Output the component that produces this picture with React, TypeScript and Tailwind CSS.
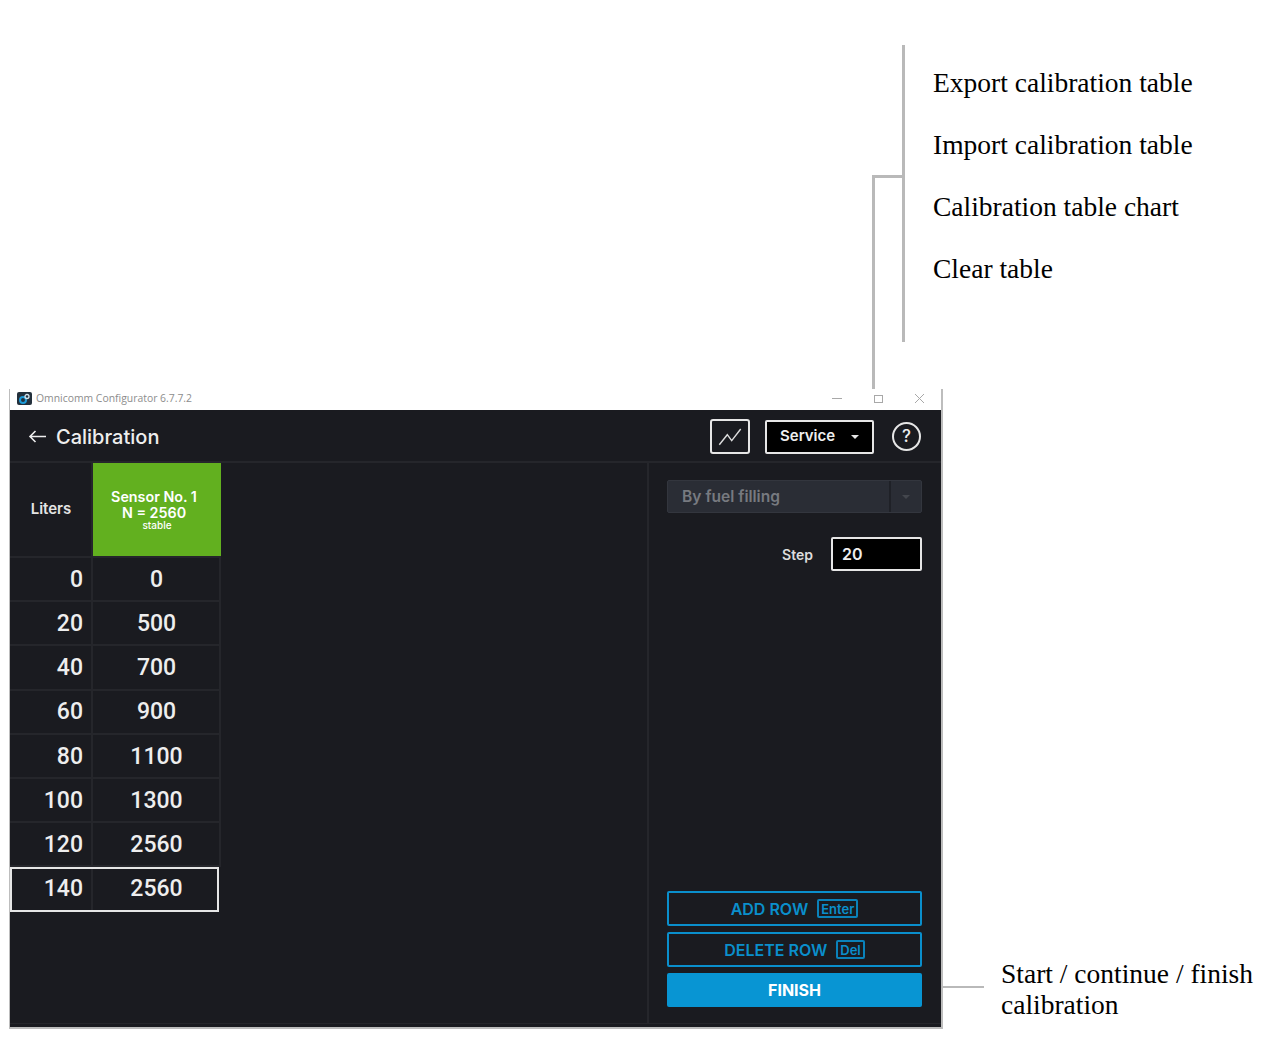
const rows = [
  ['0', '0'],
  ['20', '500'],
  ['40', '700'],
  ['60', '900'],
  ['80', '1100'],
  ['100', '1300'],
  ['120', '2560'],
  ['140', '2560'],
]

const notes = ['Export calibration table', 'Import calibration table', 'Calibration table chart', 'Clear table']

function AppLogo() {
  return (
    <svg width="15" height="13" viewBox="0 0 15 13" className="shrink-0">
      <rect width="15" height="13" rx="2" fill="#23303c" />
      <circle cx="6" cy="8" r="3" fill="none" stroke="#1d9bd8" strokeWidth="2" />
      <circle cx="10" cy="4.5" r="2" fill="none" stroke="#d5e4ee" strokeWidth="1.3" />
    </svg>
  )
}

function Caret({ color }: { color: string }) {
  return (
    <svg width="8" height="4" viewBox="0 0 8 4">
      <path d="M0 0h8L4 4z" fill={color} />
    </svg>
  )
}

function Shortcut({ label }: { label: string }) {
  return (
    <span className="border-2 border-[#0a82ba] rounded-[2px] px-[2px] pt-[1px] h-[19px] flex items-center text-[13px] font-semibold leading-none ml-[9px]">
      {label}
    </span>
  )
}

export default function App() {
  return (
    <div className="relative w-[1269px] h-[1044px] bg-white overflow-hidden font-['Inter',sans-serif]">
      {/* callout lines */}
      <div className="absolute left-[902px] top-[45px] w-[3px] h-[297px] bg-[#b9b9b9]" />
      <div className="absolute left-[873px] top-[175px] w-[30px] h-[3px] bg-[#b9b9b9]" />
      <div className="absolute left-[872px] top-[175px] w-[3px] h-[214px] bg-[#b9b9b9]" />
      <div className="absolute left-[941px] top-[986px] w-[43px] h-[2px] bg-[#b9b9b9]" />

      <div className="h-[389px] pl-[933px] pt-[67px] font-['Liberation_Serif',serif] text-[27.5px] text-black leading-[31px] flex flex-col gap-[31px]">
        {notes.map((note) => (
          <div key={note}>{note}</div>
        ))}
      </div>

      <div className="flex">
        <div className="ml-[9px] w-[934px] h-[640px] border-l border-r-2 border-b-2 border-[#bdbdbd] flex flex-col shrink-0">
          <div className="h-[21px] bg-white flex items-center pl-[7px] pb-[2px] shrink-0">
            <AppLogo />
            <span className="ml-[4px] font-['Open_Sans',sans-serif] text-[10.4px] text-[#8d8d8d]">Omnicomm Configurator 6.7.7.2</span>
            <div className="ml-auto flex items-center">
              <div className="w-[10px] h-px bg-[#a8a8a8]" />
              <div className="w-[9px] h-[8px] border border-[#a8a8a8] ml-[32px]" />
              <svg width="11" height="11" viewBox="0 0 11 11" className="ml-[31px] mr-[16px]">
                <path d="M1 1l9 9M10 1l-9 9" stroke="#a8a8a8" strokeWidth="1" />
              </svg>
            </div>
          </div>

          <div className="h-[53px] bg-[#1a1b20] border-b-2 border-[#25262b] flex items-center pl-[18px] pt-[2px] shrink-0">
            <svg width="18" height="13" viewBox="0 0 18 13" fill="none" stroke="#eeeeee" strokeWidth="1.6">
              <path d="M18 6.5H2M7.5 1L2 6.5 7.5 12" />
            </svg>
            <span className="ml-[10px] text-[20px] font-medium text-[#eeeeee]">Calibration</span>
            <div className="ml-auto flex items-center">
              <div className="w-[40px] h-[35px] border-2 border-[#e6e6e6] rounded-[3px] flex items-center justify-center">
                <svg width="24" height="18" viewBox="0 0 24 18" fill="none" stroke="#dddddd" strokeWidth="1.4">
                  <path d="M1.3 16.7L9.3 6.7l4.4 6L22.7 1" />
                </svg>
              </div>
              <div className="ml-[15px] w-[109px] h-[34px] bg-black border-2 border-[#e6e6e6] rounded-[2px] flex items-center pl-[13px] text-[15px] font-semibold text-[#eeeeee]">
                Service
                <span className="ml-[16px] flex"><Caret color="#e6e6e6" /></span>
              </div>
              <div className="ml-[18px] mr-[20px] w-[29px] h-[29px] rounded-full border-2 border-[#e6e6e6] flex items-center justify-center text-[17px] font-medium text-[#eeeeee]">
                ?
              </div>
            </div>
          </div>

          <div className="flex-1 flex bg-[#1a1b20] min-h-0">
            <div className="w-[639px] shrink-0 border-r-2 border-[#25262b]">
              <div className="w-[211px]">
                <div className="flex h-[95px] border-b-2 border-[#25262b]">
                  <div className="w-[83px] flex items-center justify-center pl-[1px] text-[15px] font-semibold text-[#e4e4e4] border-r-2 border-[#25262b]">
                    Liters
                  </div>
                  <div className="w-[128px] bg-[#62b01f] text-white flex flex-col items-center justify-center font-semibold text-[14.3px] leading-[16px] pb-[1px]">
                    <span className="pr-[6px]">Sensor No. 1</span>
                    <span className="pr-[6px]">N = 2560</span>
                    <span className="text-[10px] leading-[9px] font-medium">stable</span>
                  </div>
                </div>
                {rows.map(([liters, value], i) => (
                  <div
                    key={i}
                    className={
                      i === rows.length - 1
                        ? 'flex h-[44.2px] text-[23px] font-["Roboto",sans-serif] font-medium text-[#eeeeee] border-2 border-[#e6e6e6] w-[209px]'
                        : 'flex h-[44.2px] text-[23px] font-["Roboto",sans-serif] font-medium text-[#eeeeee] border-b-2 border-r-2 border-[#25262b] w-[211px]'
                    }
                  >
                    <div
                      className={
                        i === rows.length - 1
                          ? 'w-[81px] flex items-center justify-end pr-[8px] border-r-2 border-[#25262b]'
                          : 'w-[83px] flex items-center justify-end pr-[8px] pt-[2px] border-r-2 border-[#25262b]'
                      }
                    >
                      {liters}
                    </div>
                    <div
                      className={
                        i === rows.length - 1
                          ? 'flex-1 flex items-center justify-center pl-[3px]'
                          : 'flex-1 flex items-center justify-center pl-[1px] pt-[2px]'
                      }
                    >
                      {value}
                    </div>
                  </div>
                ))}
              </div>
            </div>

            <div className="flex-1 pl-[18px] pr-[19px] pt-[17px] pb-[16px] flex flex-col">
              <div className="h-[33px] bg-[#2a2d35] border border-[#33363e] rounded-[2px] flex items-center shrink-0">
                <span className="flex-1 pl-[14px] text-[15.6px] font-semibold text-[#777a80]">By fuel filling</span>
                <div className="w-[32px] h-full border-l-2 border-[#1f2127] flex items-center justify-center">
                  <Caret color="#43464d" />
                </div>
              </div>
              <div className="mt-[24px] flex items-center justify-end">
                <span className="text-[14px] font-semibold text-[#dddddd] mr-[18px]">Step</span>
                <div className="w-[91px] h-[34px] bg-black border-2 border-[#e6e6e6] rounded-[2px] flex items-center pl-[9px] text-[16px] font-semibold text-[#eeeeee]">
                  20
                </div>
              </div>
              <div className="mt-auto flex flex-col gap-[6px] text-[16px] font-semibold text-[#0a8fcc]">
                <div className="h-[35px] border-2 border-[#0a8fcc] rounded-[2px] flex items-center justify-center">
                  ADD ROW
                  <Shortcut label="Enter" />
                </div>
                <div className="h-[35px] border-2 border-[#0a8fcc] rounded-[2px] flex items-center justify-center">
                  DELETE ROW
                  <Shortcut label="Del" />
                </div>
                <div className="h-[34px] bg-[#0895d3] rounded-[2px] flex items-center justify-center text-[16px] text-white font-bold">
                  FINISH
                </div>
              </div>
            </div>
          </div>
          <div className="h-[4px] bg-[#1a1b20] border-t border-[#25262b] shrink-0" />
        </div>

        <div className="ml-[58px] self-end mb-[9px] font-['Liberation_Serif',serif] text-[27.5px] leading-[31px] text-black whitespace-nowrap">
          <div>Start / continue / finish</div>
          <div>calibration</div>
        </div>
      </div>
    </div>
  )
}
